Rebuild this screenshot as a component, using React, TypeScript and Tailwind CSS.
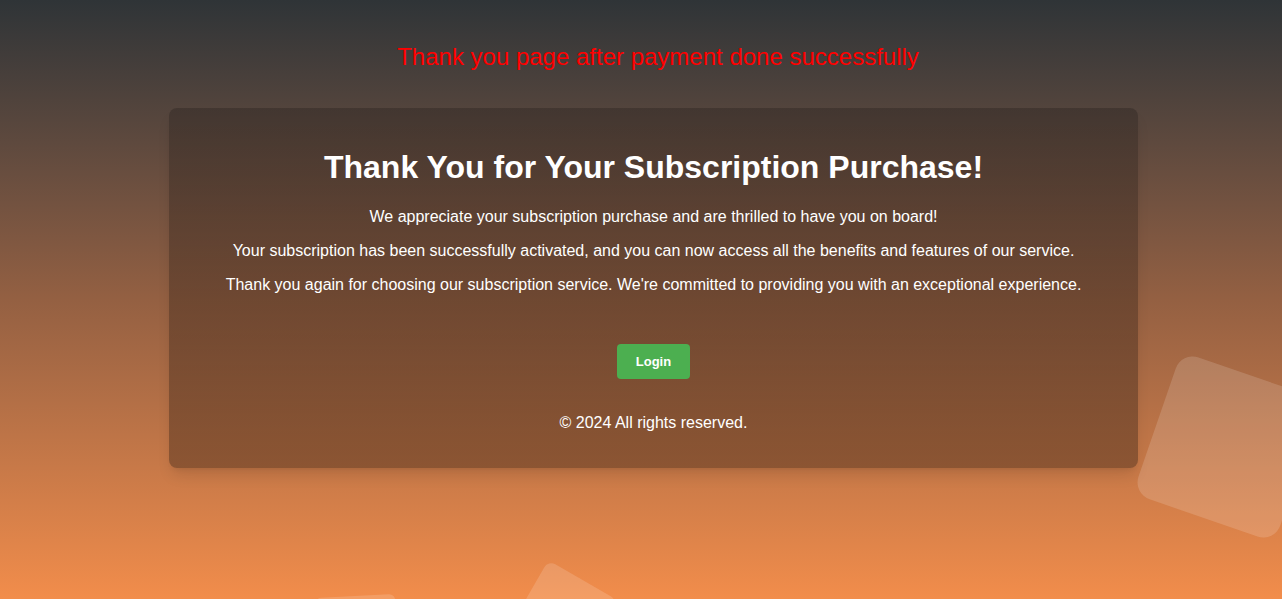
import React from "react";

// --- Floating decoration squares ---
const Shapes = () => (
  <>
    <div className="absolute left-[1153px] top-[372px] w-[150px] h-[150px] rounded-[18px] bg-white/15 rotate-[19deg]" />
    <div className="absolute left-[523px] top-[575px] w-[80px] h-[80px] rounded-[8px] bg-white/15 rotate-[30deg]" />
    <div className="absolute left-[317px] top-[596px] w-[80px] h-[80px] rounded-[6px] bg-white/15 -rotate-[3deg]" />
  </>
);

export default function App() {
  return (
    <div
      className="relative h-screen overflow-hidden bg-gradient-to-b from-[#2f3437] via-[#946042] to-[#f28d4b] text-white"
      style={{ fontFamily: '"Liberation Sans", Arial, sans-serif' }}
    >
      <Shapes />

      <div className="relative z-10 flex flex-col items-center pl-[25px] pt-[43px]">
        <p className="pl-[9px] text-[24px] leading-[28px] text-[#ff0000]">
          Thank you page after payment done successfully
        </p>

        <div className="mt-[37px] w-[969px] rounded-lg bg-gradient-to-b from-black/20 to-black/30 shadow-lg shadow-black/10 px-10 pt-[41px] pb-[36px] text-center">
          <h1 className="text-[32px] leading-[37px] font-bold">
            Thank You for Your Subscription Purchase!
          </h1>
          <div className="mt-[22px] flex flex-col gap-4 text-[16px] leading-[18px]">
            <p>We appreciate your subscription purchase and are thrilled to have you on board!</p>
            <p>
              Your subscription has been successfully activated, and you can now access all the
              benefits and features of our service.
            </p>
            <p>
              Thank you again for choosing our subscription service. We're committed to providing
              you with an exceptional experience.
            </p>
          </div>

          <button className="mt-[50px] w-[73px] h-[35px] rounded bg-[#4caf50] text-[13px] font-bold text-white">
            Login
          </button>

          <p className="mt-[35px] text-[16px] leading-[18px]">© 2024 All rights reserved.</p>
        </div>
      </div>
    </div>
  );
}
